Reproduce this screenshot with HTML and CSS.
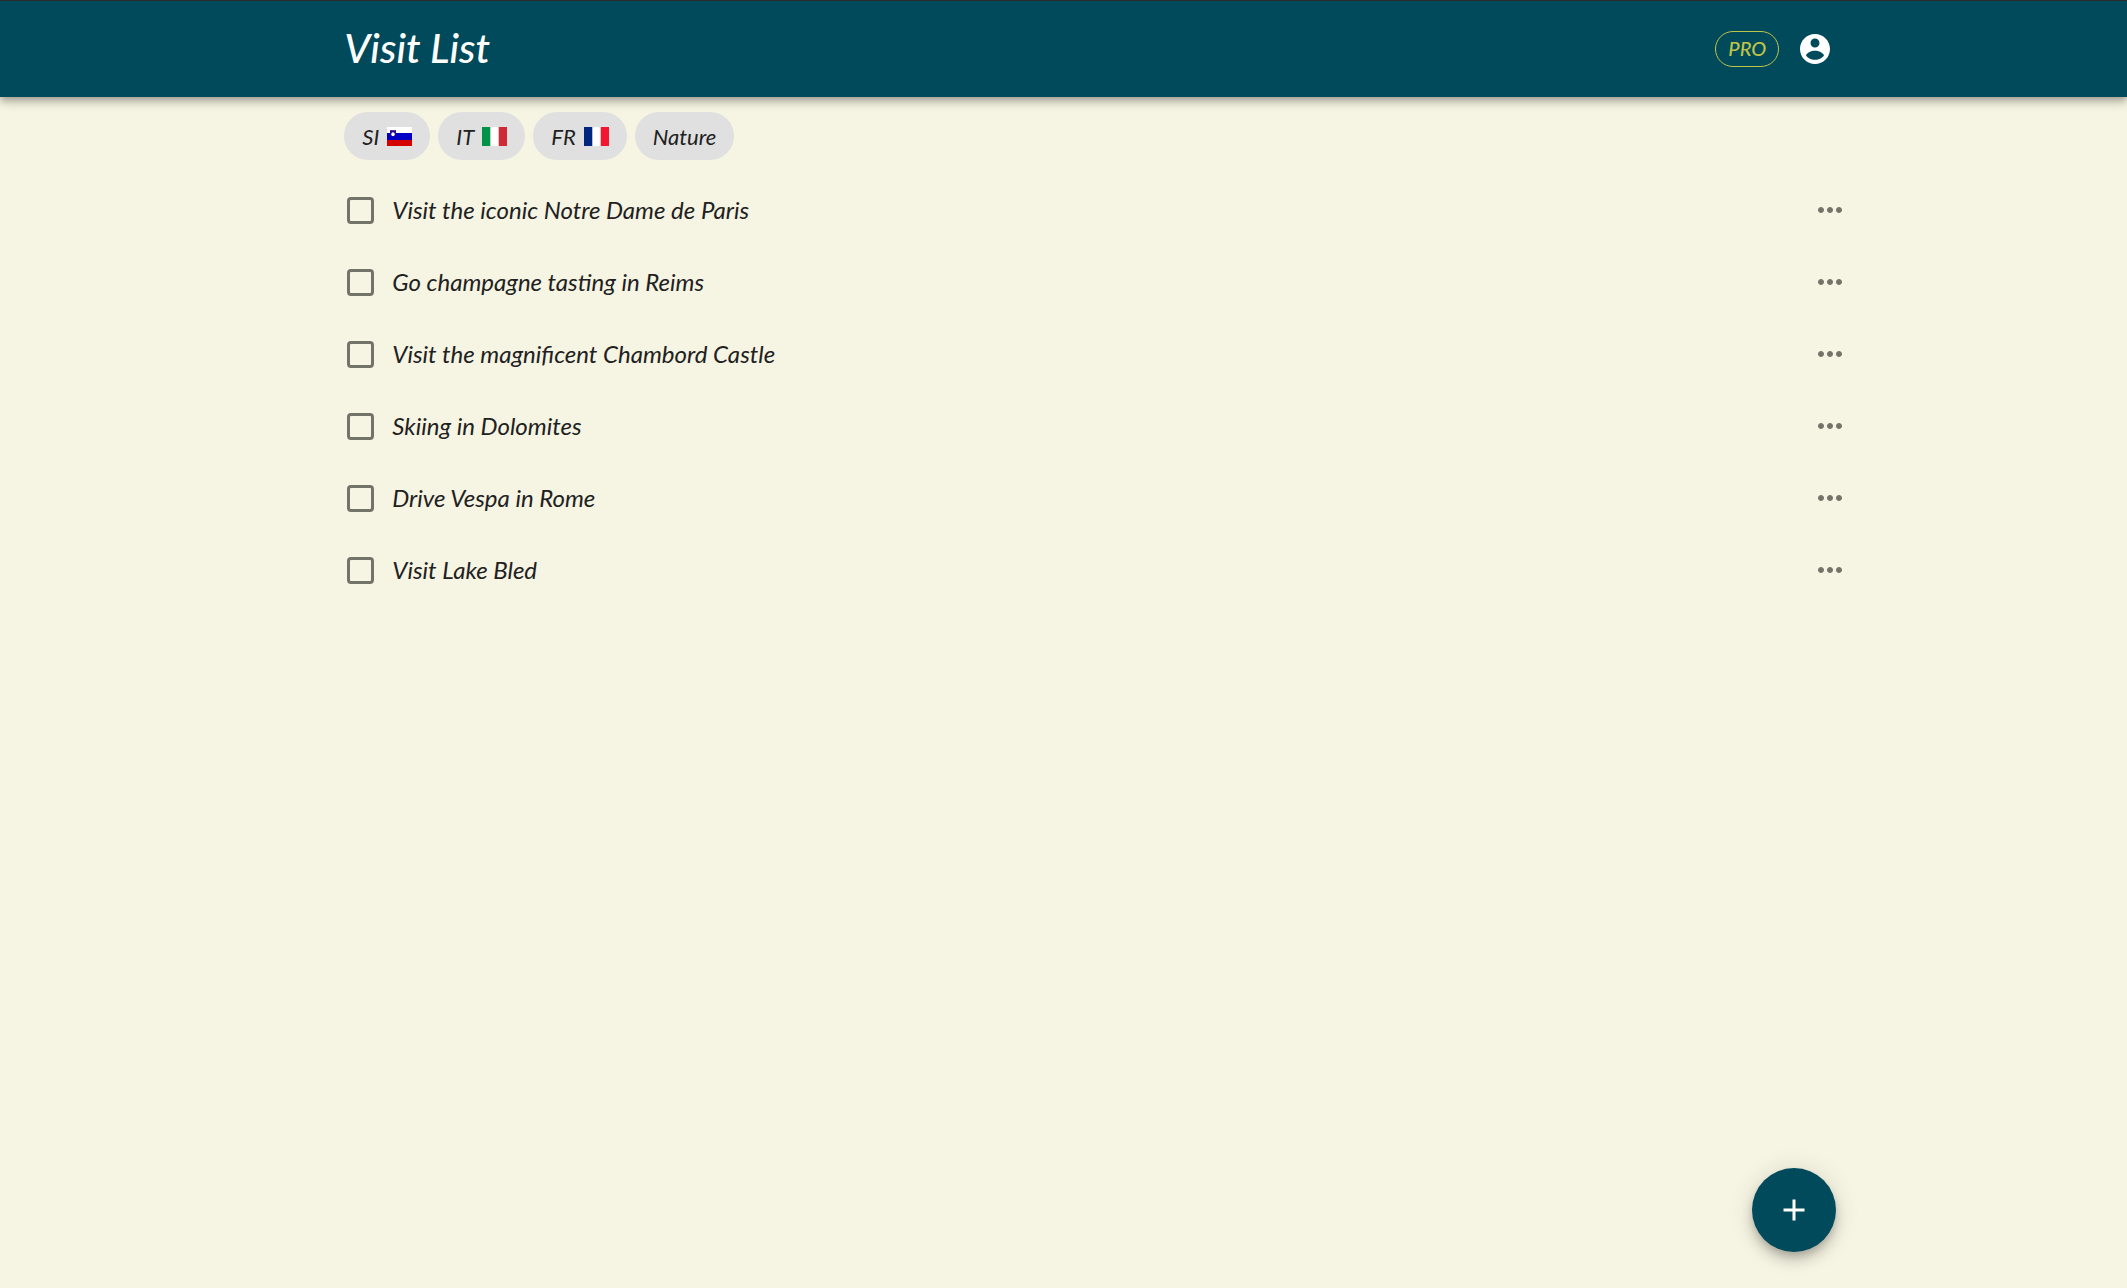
FILE: index.html
```html
<!DOCTYPE html>
<html lang="en">
<head>
  <meta charset="UTF-8" />
  <meta name="viewport" content="width=device-width, initial-scale=1" />
  <title>Visit List</title>
  <link rel="stylesheet" href="styles.css">
</head>
<body>

  <header class="app-bar">
    <h1>Visit List</h1>
    <div class="app-bar-actions">
      <button class="pro-button">PRO</button>
      <button class="icon-button account-button" aria-label="Account">
        <svg viewBox="0 0 24 24"><path d="M12 2C6.48 2 2 6.48 2 12s4.48 10 10 10 10-4.48 10-10S17.52 2 12 2zm0 3c1.66 0 3 1.34 3 3s-1.34 3-3 3-3-1.34-3-3 1.34-3 3-3zm0 8.200c2.700 0 5.200 1.300 6 3-.8 1.700-3.300 3-6 3s-5.200-1.300-6-3c.8-1.700 3.300-3 6-3z"/></svg>
      </button>
    </div>
  </header>

  <main class="content">
    <div class="filters">
      <button class="chip">SI
        <svg class="flag" viewBox="0 0 25 19" aria-hidden="true">
          <rect width="25" height="19" fill="#fff"/>
          <rect y="6" width="25" height="7" fill="#0000c4"/>
          <rect y="13" width="25" height="6" fill="#d50000"/>
          <path d="M3 3h6v4c0 1.500-1.500 2.500-3 3-1.500-.5-3-1.500-3-3z" fill="#2a0f8c"/>
          <path d="M3 3h6v1H3z" fill="#5b2a9a"/>
          <path d="M4 7l2-2 2 2-1 2H5z" fill="#fff"/>
        </svg>
      </button>
      <button class="chip">IT
        <svg class="flag" viewBox="0 0 25 19" aria-hidden="true">
          <rect width="25" height="19" fill="#fff"/>
          <rect width="8.300" height="19" fill="#009246"/>
          <rect x="16.700" width="8.300" height="19" fill="#ce2b37"/>
        </svg>
      </button>
      <button class="chip">FR
        <svg class="flag" viewBox="0 0 25 19" aria-hidden="true">
          <rect width="25" height="19" fill="#fff"/>
          <rect width="8.300" height="19" fill="#00267f"/>
          <rect x="16.700" width="8.300" height="19" fill="#f31830"/>
        </svg>
      </button>
      <button class="chip">Nature</button>
    </div>

    <ul class="visits" id="visits"></ul>
  </main>

  <button class="add-button" aria-label="Add visit">
    <svg viewBox="0 0 24 24"><path d="M19 13h-6v6h-2v-6H5v-2h6V5h2v6h6z"/></svg>
  </button>

  <script>
    const visits = [
      "Visit the iconic Notre Dame de Paris",
      "Go champagne tasting in Reims",
      "Visit the magnificent Chambord Castle",
      "Skiing in Dolomites",
      "Drive Vespa in Rome",
      "Visit Lake Bled"
    ];

    document.getElementById("visits").innerHTML = visits.map((text, i) => `
      <li class="visit">
        <input type="checkbox" id="visit-${i}">
        <label for="visit-${i}">${text}</label>
        <button class="icon-button more-button" aria-label="More options">
          <svg viewBox="0 0 24 24"><path d="M6 10c-1.100 0-2 .9-2 2s.9 2 2 2 2-.9 2-2-.9-2-2-2zm12 0c-1.100 0-2 .9-2 2s.9 2 2 2 2-.9 2-2-.9-2-2-2zm-6 0c-1.100 0-2 .9-2 2s.9 2 2 2 2-.9 2-2-.9-2-2-2z"/></svg>
        </button>
      </li>`).join("");
  </script>
</body>
</html>
```
FILE: styles.css
```css
* {
  box-sizing: border-box;
  margin: 0;
  padding: 0;
}

body {
  font-family: Lato, sans-serif;
  font-style: italic;
  font-size: 24px;
  color: #212121;
  background-color: #f6f4e2;
  min-height: 100vh;
}

button {
  font: inherit;
  color: inherit;
  border: none;
  background: none;
  cursor: pointer;
}

.app-bar {
  display: flex;
  justify-content: space-between;
  align-items: center;
  height: 97px;
  padding: 0 13.25% 0 16%;
  color: #fff;
  background-color: #004a5b;
  border-top: 1px solid #2b2b2b;
  box-shadow: 0 3px 6px -1px rgba(0, 0, 0, 0.2), 0 6px 8px rgba(0, 0, 0, 0.14), 0 2px 15px rgba(0, 0, 0, 0.12);
}

.app-bar h1 {
  padding: 0 0 4px 4px;
  font-size: 41px;
  font-weight: 500;
}

.app-bar-actions {
  display: flex;
  align-items: center;
  gap: 6px;
}

.pro-button {
  height: 36px;
  padding: 0 12px 2px;
  font-size: 20px;
  font-weight: 500;
  color: #bfc548;
  border: 1px solid #bfc548;
  border-radius: 18px;
}

.icon-button {
  display: flex;
  padding: 12px;
  border-radius: 50%;
}

.icon-button svg {
  width: 36px;
  height: 36px;
  fill: currentColor;
}

.content {
  padding: 15px 12.55% 0 16%;
}

.filters {
  display: flex;
  flex-wrap: wrap;
  gap: 8px;
  padding-left: 4px;
}

.chip {
  display: flex;
  align-items: center;
  gap: 8px;
  height: 48px;
  padding: 0 18px;
  font-size: 22px;
  background-color: #e0e0e0;
  border-radius: 24px;
}

.flag {
  width: 25px;
  height: 19px;
}

.visits {
  list-style: none;
  padding-top: 14px;
}

.visit {
  display: flex;
  align-items: center;
  height: 72px;
}

.visit input {
  appearance: none;
  width: 27px;
  height: 27px;
  margin: 0 18px 0 7px;
  border: 3px solid #74736a;
  border-radius: 4px;
  cursor: pointer;
}

.visit input:checked {
  background-color: #004a5b;
  border-color: #004a5b;
}

.visit label {
  flex: 1;
  padding-bottom: 2px;
  cursor: pointer;
}

.more-button {
  color: #74736a;
}

.add-button {
  position: fixed;
  right: 291px;
  bottom: 36px;
  display: flex;
  justify-content: center;
  align-items: center;
  width: 84px;
  height: 84px;
  color: #fff;
  background-color: #004a5b;
  border-radius: 50%;
  box-shadow: 0 5px 8px -2px rgba(0, 0, 0, 0.2), 0 9px 15px rgba(0, 0, 0, 0.14), 0 2px 27px rgba(0, 0, 0, 0.12);
}

.add-button svg {
  width: 36px;
  height: 36px;
  fill: currentColor;
}
```
